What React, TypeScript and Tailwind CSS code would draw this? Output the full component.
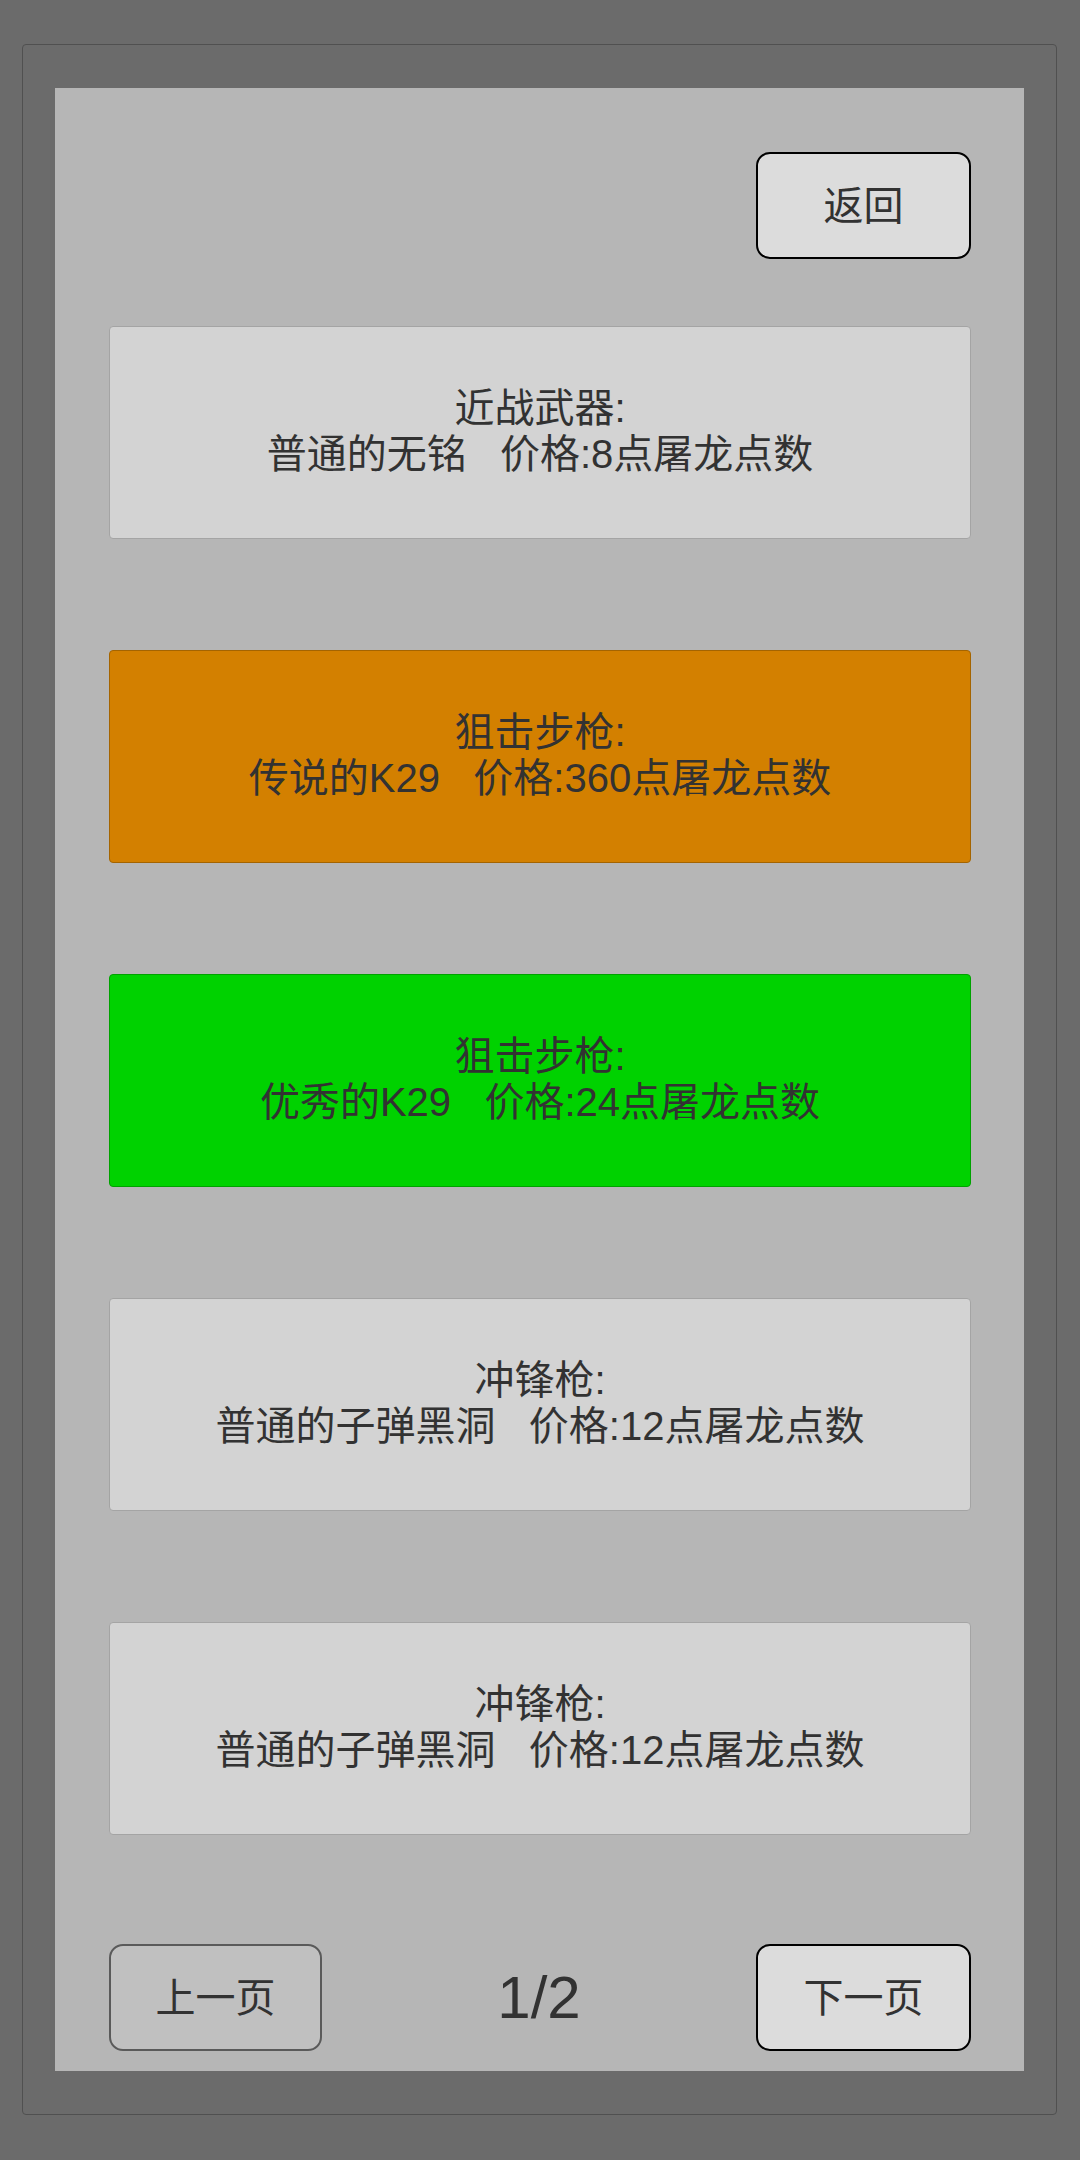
import React from "react";

type Item = {
  kind: string;
  name: string;
  price: number;
  tone: "normal" | "legend" | "good";
};

const items: Item[] = [
  { kind: "近战武器", name: "普通的无铭", price: 8, tone: "normal" },
  { kind: "狙击步枪", name: "传说的K29", price: 360, tone: "legend" },
  { kind: "狙击步枪", name: "优秀的K29", price: 24, tone: "good" },
  { kind: "冲锋枪", name: "普通的子弹黑洞", price: 12, tone: "normal" },
  { kind: "冲锋枪", name: "普通的子弹黑洞", price: 12, tone: "normal" },
];

const toneClass: Record<Item["tone"], string> = {
  normal: "bg-[#d3d3d3] border-[#a4a4a4]",
  legend: "bg-[#d38000] border-[#a46400]",
  good: "bg-[#00d200] border-[#00a200]",
};

const font = {
  fontFamily: '"Liberation Sans", "Noto Sans CJK SC", sans-serif',
};

function ItemCard({ item }: { item: Item }) {
  return (
    <button
      className={`flex h-[213px] w-full flex-col items-center justify-center rounded-[4px] border pb-[4px] text-[40px] leading-[46px] text-[#323232] ${toneClass[item.tone]}`}
    >
      <span>{item.kind}:</span>
      <span className="whitespace-pre">
        {item.name}
        {"   "}价格:{item.price}点屠龙点数
      </span>
    </button>
  );
}

export default function App() {
  return (
    <main
      className="flex h-[2160px] w-[1080px] bg-[#6b6b6b] pl-[22px] pt-[44px]"
      style={font}
    >
      <div className="h-[2071px] w-[1035px] rounded-[4px] border border-[#505050] pl-[32px] pt-[43px]">
        <div className="flex h-[1983px] w-[969px] flex-col bg-[#b6b6b6] pl-[54px] pr-[53px] pt-[64px]">
          {/* ---- header ---- */}
          <div className="flex justify-end">
            <button className="flex h-[107px] w-[215px] items-center justify-center rounded-[14px] border-2 border-black bg-[#dcdcdc] text-[40px] text-[#323232]">
              返回
            </button>
          </div>

          {/* ---- list ---- */}
          <div className="mt-[67px] flex flex-col gap-[111px]">
            {items.map((item, index) => (
              <ItemCard key={index} item={item} />
            ))}
          </div>

          {/* ---- pager ---- */}
          <div className="mt-[109px] flex items-center justify-between">
            <button className="flex h-[107px] w-[213px] items-center justify-center rounded-[14px] border-2 border-[#5a5a5a] bg-[#c0c0c0] text-[40px] text-[#323232]">
              上一页
            </button>
            <span className="text-[60px] leading-none text-[#323232]">1/2</span>
            <button className="flex h-[107px] w-[215px] items-center justify-center rounded-[14px] border-2 border-black bg-[#dcdcdc] text-[40px] text-[#323232]">
              下一页
            </button>
          </div>
        </div>
      </div>
    </main>
  );
}
